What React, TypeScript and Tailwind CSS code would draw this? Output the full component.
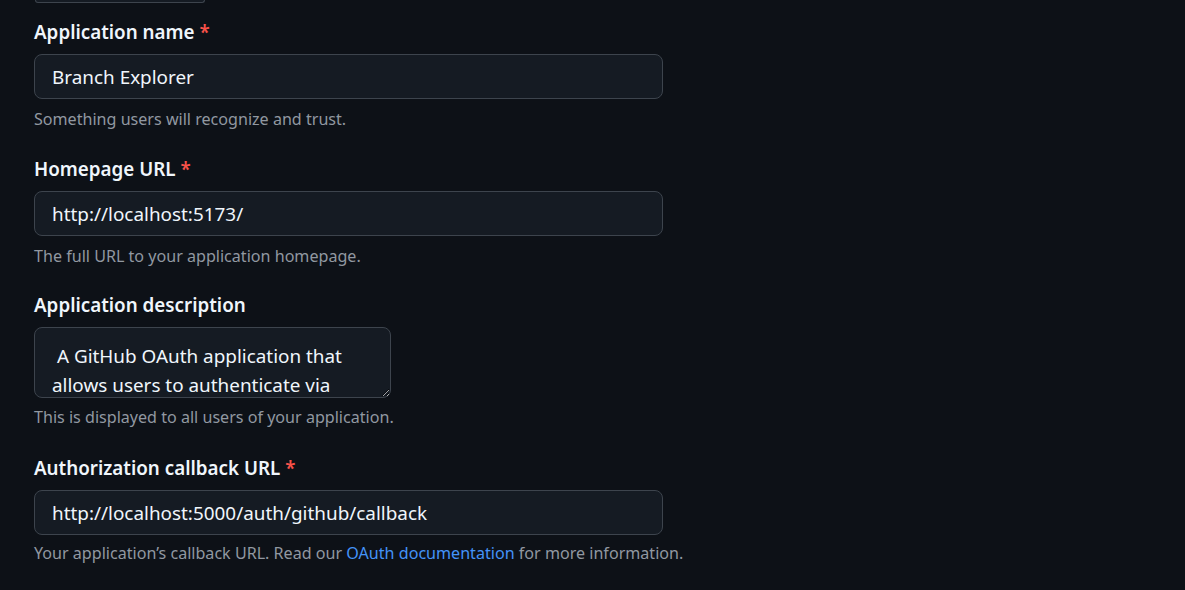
import React from 'react';

const fields = [
  {
    label: 'Application name',
    required: true,
    value: 'Branch Explorer',
    help: 'Something users will recognize and trust.',
    gap: 'mb-[24px]',
  },
  {
    label: 'Homepage URL',
    required: true,
    value: 'http://localhost:5173/',
    help: 'The full URL to your application homepage.',
    gap: 'mb-[23px]',
  },
];

function Label({ text, required }: { text: string; required?: boolean }) {
  return (
    <label className="block h-[28px] leading-[28px] text-[18.8px] font-semibold text-[#f0f6fc]">
      {text}
      {required && <span className="ml-[5px] text-[#f85149]">*</span>}
    </label>
  );
}

function TextInput({ value }: { value: string }) {
  return (
    <input
      readOnly
      value={value}
      className="mt-[8px] block h-[45px] w-[629px] rounded-[8px] border border-[#3d444d] bg-[#151b23] px-[17px] text-[18.9px] text-[#f0f6fc] outline-none"
    />
  );
}

export default function App() {
  return (
    <div
      className="min-h-[590px] bg-[#0d1117] pl-[34px]"
      style={{ fontFamily: '"Noto Sans", "Liberation Sans", sans-serif' }}
    >
      <div className="ml-px h-[3px] w-[170px] rounded-b-[8px] border-x border-b border-[#3d444d] bg-[#151b23]" />

      <div className="pt-[15px]">
        {fields.map((f) => (
          <div key={f.label} className={f.gap}>
            <Label text={f.label} required={f.required} />
            <TextInput value={f.value} />
            <p className="mt-[8px] h-[24px] leading-[24px] text-[16.1px] text-[#9198a1]">{f.help}</p>
          </div>
        ))}

        <div className="mb-[25px]">
          <Label text="Application description" />
          <textarea
            readOnly
            value=" A GitHub OAuth application that allows users to authenticate via GitHub and explore the branches of their repositories."
            className="mt-[8px] block h-[71px] w-[357px] resize rounded-[8px] border border-[#3d444d] bg-[#151b23] px-[17px] pt-[14px] text-[18.9px] leading-[29px] text-[#f0f6fc] outline-none overflow-hidden"
          />
          <p className="mt-[7px] h-[24px] leading-[24px] text-[16.1px] text-[#9198a1]">
            This is displayed to all users of your application.
          </p>
        </div>

        <div>
          <Label text="Authorization callback URL" required />
          <TextInput value="http://localhost:5000/auth/github/callback" />
          <p className="mt-[6px] h-[24px] leading-[24px] text-[16.1px] text-[#9198a1]">
            Your application’s callback URL. Read our{' '}
            <a href="#" className="text-[#4493f8]">
              OAuth documentation
            </a>{' '}
            for more information.
          </p>
        </div>
      </div>
    </div>
  );
}
